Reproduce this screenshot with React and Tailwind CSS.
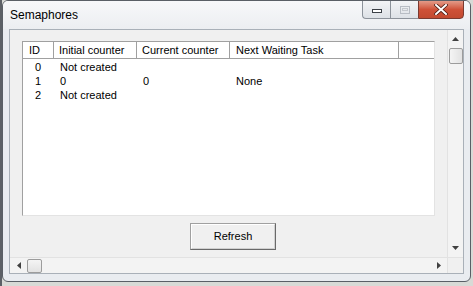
import React from "react";

const F = { fontFamily: '"Liberation Sans", Arial, sans-serif' };

function Header({ w, children, last }) {
  return (
    <div
      className={`h-[17px] flex items-center pt-[1px] shrink-0 border-b border-[#a0a0a0] bg-white ${last ? "" : "border-r border-r-[#a0a0a0]"}`}
      style={{ width: w }}
    >
      {children}
    </div>
  );
}

export default function App() {
  const rows = [
    ["0", "Not created", "", ""],
    ["1", "0", "0", "None"],
    ["2", "Not created", "", ""],
  ];
  return (
    <div className="w-[473px] h-[286px] bg-[#d8dad6] overflow-hidden flex" style={F}>
      <div className="w-[2px] h-full bg-[#5c6066] shrink-0" />
      <div className="w-[469px] h-[282px] rounded-[6px] border border-[#5a5f66] bg-[#e9ecf0] flex flex-col shrink-0 overflow-hidden">
        {/* title bar */}
        <div className="h-[28px] flex shrink-0 bg-gradient-to-b from-[#f7f8fa] to-[#eceef1]">
          <div className="pl-[7px] pt-[6px] text-[12px] text-black leading-[16px]">Semaphores</div>
          <div className="flex-1" />
          <div className="flex mr-[6px] h-[19px] mt-[-1px]">
            <div className="w-[28px] h-[19px] border border-[#8c929a] border-r-0 rounded-bl-[4px] bg-gradient-to-b from-[#f3f4f6] to-[#dde1e6] flex items-center justify-center">
              <div className="w-[10px] h-[4px] border border-[#3b4046] bg-white mt-[3px]" />
            </div>
            <div className="w-[28px] h-[19px] border border-[#8c929a] border-r-0 bg-gradient-to-b from-[#f3f4f6] to-[#dde1e6] flex items-center justify-center">
              <div className="w-[10px] h-[8px] border border-[#b8bdc4] flex items-center justify-center">
                <div className="w-[6px] h-[3px] border border-[#c4c8cd]" />
              </div>
            </div>
            <div className="w-[46px] h-[19px] border border-[#7a3a30] rounded-br-[4px] bg-gradient-to-b from-[#e39a88] via-[#cf5138] to-[#c24a30] flex items-center justify-center">
              <svg width="14" height="11" viewBox="0 0 14 11">
                <path d="M2 1 L12 10 M12 1 L2 10" stroke="#4a1a12" strokeWidth="3.6" strokeLinecap="square" />
                <path d="M2 1 L12 10 M12 1 L2 10" stroke="#ffffff" strokeWidth="2" strokeLinecap="square" />
              </svg>
            </div>
          </div>
        </div>
        {/* client frame */}
        <div className="flex-1 flex px-[6px] pb-[7px] pt-[0px]">
          <div className="flex-1 border border-[#a9b0b8] bg-[#f0f0f0] flex flex-col">
            <div className="flex flex-1">
              {/* content */}
              <div className="flex-1 flex flex-col pl-[12px] pt-[11px]">
                <div className="w-[413px] h-[175px] border border-[#a0a0a0] border-b-[#e3e3e3] border-r-[#e3e3e3] bg-white flex flex-col text-[11px] text-black">
                  <div className="flex">
                    <Header w={31}><span className="pl-[6px]">ID</span></Header>
                    <Header w={83}><span className="pl-[5px]">Initial counter</span></Header>
                    <Header w={93}><span className="pl-[5px]">Current counter</span></Header>
                    <Header w={169}><span className="pl-[6px]">Next Waiting Task</span></Header>
                    <Header w={35} last />
                  </div>
                  <div className="pt-[1px]">
                    {rows.map((r) => (
                      <div key={r[0]} className="flex h-[14px] items-center leading-[14px]">
                        <div className="w-[31px] pl-[12px]">{r[0]}</div>
                        <div className="w-[83px] pl-[6px]">{r[1]}</div>
                        <div className="w-[93px] pl-[6px]">{r[2]}</div>
                        <div className="w-[169px] pl-[6px]">{r[3]}</div>
                      </div>
                    ))}
                  </div>
                </div>
                <div className="pl-[168px] pt-[7px]">
                  <div className="w-[86px] h-[27px] border border-[#a0a0a0] border-r-[#696969] border-b-[#696969] bg-[#f0f0f0] flex items-center justify-center text-[11px] text-black">
                    <div className="w-full h-full border border-white border-r-[#d0d0d0] border-b-[#d0d0d0] flex items-center justify-center">Refresh</div>
                  </div>
                </div>
              </div>
              {/* vertical scrollbar */}
              <div className="w-[16px] border-l border-[#e2e2e2] bg-[#f3f3f3] flex flex-col items-center">
                <div className="h-[18px] w-full flex items-center justify-center">
                  <svg width="7" height="4" viewBox="0 0 7 4"><path d="M0 4 L3.5 0 L7 4 Z" fill="#404040" /></svg>
                </div>
                <div className="w-[14px] h-[16px] rounded-[2px] border border-[#9c9c9c] bg-gradient-to-r from-[#f4f4f4] to-[#e2e2e2]" />
                <div className="flex-1" />
                <div className="h-[18px] w-full flex items-center justify-center">
                  <svg width="7" height="4" viewBox="0 0 7 4"><path d="M0 0 L7 0 L3.5 4 Z" fill="#404040" /></svg>
                </div>
              </div>
            </div>
            {/* horizontal scrollbar */}
            <div className="h-[16px] flex border-t border-[#e2e2e2]">
              <div className="flex-1 bg-[#f3f3f3] flex items-center">
                <div className="w-[17px] h-full flex items-center justify-center">
                  <svg width="4" height="7" viewBox="0 0 4 7"><path d="M4 0 L4 7 L0 3.5 Z" fill="#404040" /></svg>
                </div>
                <div className="w-[15px] h-[14px] rounded-[2px] border border-[#9c9c9c] bg-gradient-to-b from-[#f4f4f4] to-[#e2e2e2]" />
                <div className="flex-1" />
                <div className="w-[17px] h-full flex items-center justify-center">
                  <svg width="4" height="7" viewBox="0 0 4 7"><path d="M0 0 L4 3.5 L0 7 Z" fill="#404040" /></svg>
                </div>
              </div>
              <div className="w-[16px] bg-[#f0f0f0] border-l border-[#e2e2e2]" />
            </div>
          </div>
        </div>
      </div>
    </div>
  );
}
